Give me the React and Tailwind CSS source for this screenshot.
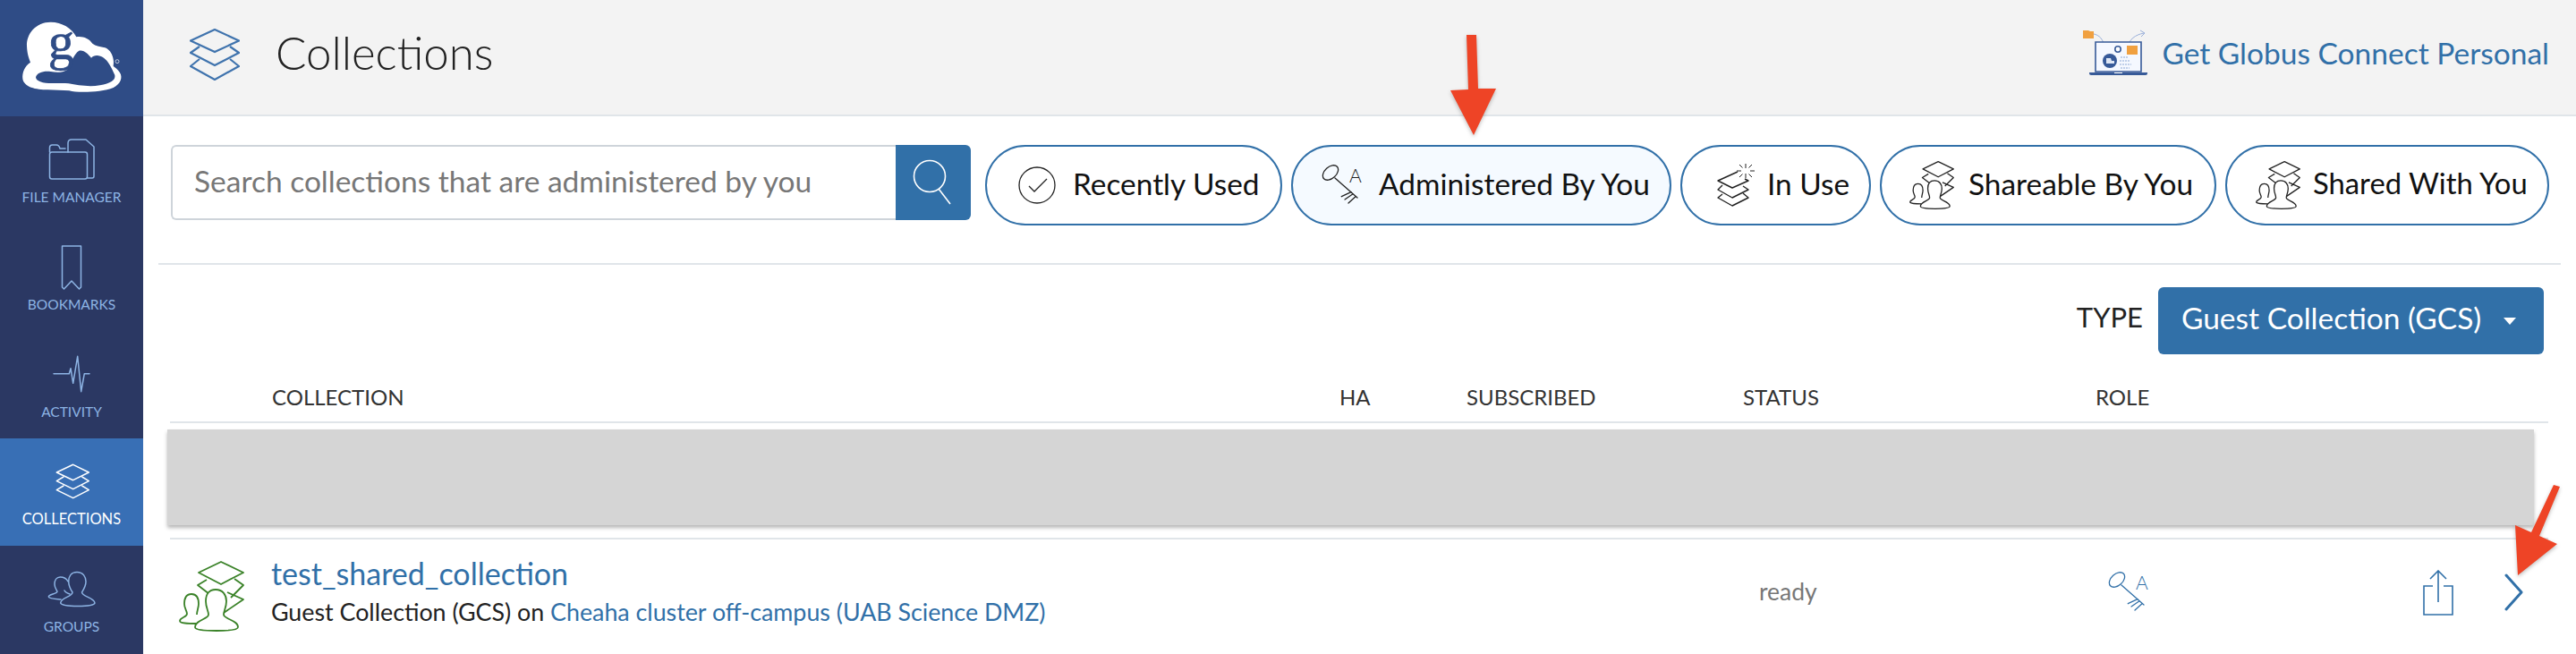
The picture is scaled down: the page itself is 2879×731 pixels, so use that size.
const NAV_STROKE = "#8db4e4";

function NavSvg({ children, active }) {
  return (
    <svg width="60" height="56" viewBox="0 0 60 56" fill="none" stroke={active ? "#ffffff" : NAV_STROKE} strokeWidth="1.5" strokeLinejoin="round" strokeLinecap="round">
      {children}
    </svg>
  );
}

function NavItem({ label, active, children }) {
  return (
    <div className={`flex h-[120px] shrink-0 flex-col items-center pt-5 ${active ? "bg-[#386fb5] text-white" : "text-[#8db4e4]"}`}>
      {children}
      <div className={`mt-[3px] leading-[22px] whitespace-nowrap ${active ? "text-[16.5px]" : "text-[15.5px]"}`}>{label}</div>
    </div>
  );
}

function KeyIcon({ color }) {
  return (
    <div className="relative h-[46px] w-[50px] shrink-0" style={{ color }}>
      <svg width="50" height="46" viewBox="0 0 50 46" fill="none" stroke="currentColor" strokeWidth="1.3" strokeLinecap="round">
        <ellipse cx="10" cy="9" rx="10" ry="6.5" transform="rotate(-42 10 9)" />
        <path d="M15 15 L40 37" />
        <path d="M22.3 35.7 L33 30.7 M26 39 L34.7 33 M30 43 L38 35.7" />
      </svg>
      <span className="absolute left-[31px] top-0 text-[21px] leading-[24px] font-light">A</span>
    </div>
  );
}

function SharedIcon({ width, height, color, stroke }) {
  return (
    <svg width={width} height={height} viewBox="0 0 73 79" fill="none" stroke={color} strokeWidth={stroke} strokeLinejoin="round" className="shrink-0">
      <path d="M47 1 L72 13 L47 26 L22 13 Z" fill="#fff" />
      <path d="M31 21 L21 27 L34 37" />
      <path d="M62 20 L72 27 L58 41" />
      <path d="M54 35 L72 43 L50 58" />
      <path d="M14 37 C8 37 6 42 6 48 C6 53 9 56 9 59 C9 63 1 63 1 67 C1 70 10 70 20 70 M14 37 C20 37 22 42 22 48 C22 52 20 56 20 60" />
      <path d="M41 32 C33 32 30 38 30 45 C30 52 33 56 33 60 C33 65 18 66 18 74 C18 77 30 78 42 78 C54 78 66 77 66 74 C66 66 50 65 50 60 C50 56 53 52 53 45 C53 38 49 32 41 32 Z" fill="#fff" />
    </svg>
  );
}

function Pill({ width, active, icon, label, textLeft, pad, size }) {
  return (
    <div className={`flex h-[90px] shrink-0 items-center rounded-[45px] border-2 border-[#3170a8] ${active ? "bg-[#f5faff]" : "bg-white"} ${width}`}>
      <div className={`flex h-[60px] shrink-0 items-center ${pad}`} style={{ width: textLeft }}>{icon}</div>
      <span className={`-mt-1 leading-[40px] font-normal whitespace-nowrap text-[#111] ${size || "text-[33.4px]"}`}>{label}</span>
    </div>
  );
}

function Logo() {
  return (
    <svg width="160" height="130" viewBox="-60 -54 480 390" className="block">
      <path fill="#fff" d="M110 20 C60 20 28 60 30 100 C31 125 36 140 42 155 C22 168 14 190 16 210 C20 238 60 247 100 247 C125 247 150 250 172 250 C200 258 280 256 320 240 C345 228 352 205 342 190 C335 178 326 172 320 168 C326 140 310 108 288 105 C272 102 262 100 250 92 C238 74 215 66 196 70 C180 40 148 20 110 20 Z" />
      <path fill="#2f4c86" d="M60 205 C64 190 85 183 110 186 C130 190 150 190 165 180 C178 160 188 125 205 116 C222 112 236 128 246 140 C254 130 272 128 288 140 C302 150 312 168 325 198 C328 215 310 226 275 232 C240 238 200 232 170 226 C140 222 100 230 75 220 C66 216 60 212 60 205 Z" />
      <text x="101" y="145" fontFamily="'Liberation Serif', serif" fontWeight="400" fontSize="175" stroke="#2f4c86" strokeWidth="2" fill="#2f4c86">g</text>
      <circle cx="333" cy="152" r="6" fill="none" stroke="#fff" strokeWidth="2" />
    </svg>
  );
}

function ConnectIcon() {
  return (
    <svg width="72" height="54" viewBox="0 0 72 54" fill="none" className="shrink-0">
      <path d="M0 2 H6 L8 3 H12 V11 H0 Z" fill="#f0a040" />
      <path d="M12 6 C18 7 23 12 24 21 M21 17 L24 22 L27 18" stroke="#8ea7d6" strokeWidth="0.9" />
      <path d="M50 20 C52 12 58 7 68 5 M64 2 L69 5 L65 9" stroke="#8ea7d6" strokeWidth="0.9" />
      <path d="M14 15 H65 V48 H14 Z" fill="#f5f8ff" stroke="#375a98" strokeWidth="1.6" />
      <path d="M7 49 H72 V50 Q72 52 70 52 H9 Q7 52 7 50 Z" fill="#375a98" />
      <rect x="35" y="49" width="9" height="1" fill="#fff" />
      <circle cx="30" cy="36" r="8" fill="#375a98" />
      <circle cx="39" cy="23" r="3.2" fill="#fff" stroke="#375a98" strokeWidth="1.6" />
      <path d="M26 39 V33 H31 L32 36 H35 V39 Z" fill="#dfe7f5" />
      <rect x="49" y="19" width="12" height="10" fill="#f0a040" />
      <path d="M42 32 H50 M41 36 H53 M41 40 H54 M42 44 H52" stroke="#8ea7d6" strokeWidth="1.1" strokeDasharray="2 1" />
    </svg>
  );
}

function RedArrow({ points }) {
  return (
    <svg className="absolute left-0 top-0" width="2879" height="731" viewBox="0 0 2879 731" fill="#ee4426" style={{ pointerEvents: "none", filter: "drop-shadow(0 2px 2px rgba(0,0,0,.25))" }}>
      <polygon points={points} />
    </svg>
  );
}

export default function App() {
  return (
    <div className="relative flex h-[731px] w-full overflow-hidden bg-white font-['Lato','Liberation_Sans',sans-serif] font-light text-[#111]">
      <aside className="flex w-[160px] shrink-0 flex-col bg-[#2b3863] font-normal">
        <div className="h-[130px] shrink-0 bg-[#2f4c86]"><Logo /></div>
        <NavItem label="FILE MANAGER">
          <NavSvg>
            <path d="M26 20 V10 Q26 6 30 6 H46 L55 14 V47 Q55 49 53 49 H48" />
            <path d="M5.5 20 V15 Q5.5 12 8.5 12 H13 Q16 12 17 16 H23" />
            <rect x="5.5" y="20" width="42" height="30" rx="2.5" />
          </NavSvg>
        </NavItem>
        <NavItem label="BOOKMARKS">
          <NavSvg><path d="M19.5 5 H40.5 V51 L38.5 53 L30 44 L21.5 53 L19.5 51 Z" /></NavSvg>
        </NavItem>
        <NavItem label="ACTIVITY">
          <NavSvg><path d="M10 27.7 H27.3 L29 21.7 L31.7 38.3 L36.7 8.3 L40.7 47.7 L44.3 27.7 H50" /></NavSvg>
        </NavItem>
        <NavItem label="COLLECTIONS" active>
          <NavSvg active>
            <path d="M31.7 9.3 L49.3 18 L31.7 26.7 L13.3 18 Z" />
            <path d="M21 23 L13.3 27.7 L31.7 36.7 L49.3 27.7 L41.7 23" />
            <path d="M21 33 L13.3 37.7 L31.7 46.7 L49.3 37.7 L41.7 33" />
          </NavSvg>
        </NavItem>
        <NavItem label="GROUPS">
          <NavSvg>
            <path d="M26 20 C24 16 21 15 17.3 15 C13 15 11 19 11 23 C11 27 13 29 14 31 C14 34 4.3 34 4.3 37 C4.3 39 12 39.5 18 40" />
            <path d="M22 30 C23 32 25 33 28 34" />
            <path d="M36 9.5 C29 9.5 26.7 15 26.7 20 C26.7 25 29 29 31 32 C31 37 18 38 17.7 44 C19 47 30 47.5 37 47.5 C45 47.5 55 47 56 44 C55 38 42 37 41.5 32 C44 28 46 25 46 20 C46 15 43 9.5 36 9.5 Z" />
          </NavSvg>
        </NavItem>
      </aside>

      <main className="flex min-w-0 flex-1 flex-col">
        <header className="flex h-[130px] shrink-0 items-center border-b-2 border-[#e0e5e9] bg-[#f3f3f3] pr-[30px] pl-[52px]">
          <svg width="56" height="58" viewBox="0 0 56 58" fill="none" stroke="#3f73ad" strokeWidth="2.2" className="-mt-[6px] shrink-0">
            <path d="M28 1 L55 13.5 L28 26 L1 13.5 Z" />
            <path d="M11 20 L1 27 L28 41 L55 27 L45 20" />
            <path d="M11 34 L1 42 L28 57 L55 42 L45 34" />
          </svg>
          <h1 className="ml-[40px] -mt-[10px] text-[51px] leading-[60px] font-light text-[#222]">Collections</h1>
          <div className="ml-auto -mt-[10px] flex items-center gap-[16px]">
            <ConnectIcon />
            <span className="text-[33.5px] leading-[40px] font-normal text-[#3170a8]">Get Globus Connect Personal</span>
          </div>
        </header>

        <div className="flex shrink-0 items-start pt-[32px] pl-[31px] pr-[30px]">
          <div className="flex h-[84px] w-[894px] shrink-0 rounded-[6px]">
            <div className="flex flex-1 items-center rounded-l-[6px] border-2 border-r-0 border-[#ced4da] pl-[24px] text-[33.5px] font-normal whitespace-nowrap text-[#777]">
              <span className="-mt-1">Search collections that are administered by you</span>
            </div>
            <div className="flex w-[84px] shrink-0 items-center justify-center rounded-r-[6px] bg-[#3170a8]">
              <svg width="50" height="56" viewBox="0 0 50 56" fill="none" stroke="#fff" strokeWidth="1.6">
                <circle cx="21" cy="21" r="17.5" />
                <path d="M31 35 L44 52" />
              </svg>
            </div>
          </div>
          <div className="ml-[16px] flex gap-[10px]">
            <Pill width="w-[332px]" pad="pl-[35px]" textLeft="96px" label="Recently Used" icon={
              <svg width="42" height="42" viewBox="0 0 42 42" fill="none" stroke="#222" strokeWidth="1.3" className="shrink-0">
                <circle cx="21" cy="21" r="20" />
                <path d="M12 22 L18 28 L32 14" />
              </svg>
            } />
            <Pill width="w-[425px]" active pad="pl-[32px]" textLeft="96px" label="Administered By You" icon={<KeyIcon color="#222" />} />
            <Pill width="w-[213px]" pad="pl-[37px]" textLeft="95px" label="In Use" icon={
              <svg width="46" height="48" viewBox="0 0 46 48" fill="none" stroke="#222" strokeWidth="1.4" strokeLinejoin="round" className="shrink-0">
                <path d="M25 9 L3 19 L19 27 L37 19 L33 17" />
                <path d="M8 24 L3 29 L19 38 L37 29 L31 25" />
                <path d="M8 34 L3 38 L19 47 L37 38 L31 33" />
                <path d="M34 5 V0 M34 11 V16 M29 8 H24 M39 8 H44 M30.5 4.5 L27 1 M37.5 11.5 L41 15 M37.5 4.5 L41 1 M30.5 11.5 L27 15" strokeWidth="1" />
              </svg>
            } />
            <Pill width="w-[376px]" pad="pl-[29px]" textLeft="97px" label="Shareable By You" icon={<SharedIcon width={54} height={54} color="#222" stroke={1.9} />} />
            <Pill width="w-[362px]" pad="pl-[30px]" textLeft="96px" label="Shared With You" size="text-[32.8px]" icon={<SharedIcon width={54} height={54} color="#222" stroke={1.9} />} />
          </div>
        </div>

        <div className="mt-[42px] ml-[17px] mr-[17px] h-[2px] shrink-0 bg-[#e0e5e9]" />

        <div className="mt-[25px] flex h-[75px] shrink-0 items-center justify-end pr-[36px]">
          <span className="mr-[17px] -mt-[8px] text-[31px] font-normal text-[#222]">TYPE</span>
          <div className="flex h-[75px] w-[431px] items-center rounded-[6px] bg-[#3170a8] pl-[26px] text-white">
            <span className="-mt-[6px] text-[33.5px] font-normal whitespace-nowrap">Guest Collection (GCS)</span>
            <span className="ml-[25px] mt-[1px] h-0 w-0 border-x-[7px] border-t-[8px] border-x-transparent border-t-white" />
          </div>
        </div>

        <div className="ml-[30px] mr-[31px] grid h-[77px] shrink-0 grid-cols-[1193px_142px_309px_394px_1fr] border-b-2 border-[#e0e5e9] pt-[30px] pl-[114px] text-[24px] leading-[36px] font-normal text-[#333]">
          <span>COLLECTION</span>
          <span>HA</span>
          <span>SUBSCRIBED</span>
          <span>STATUS</span>
          <span>ROLE</span>
        </div>

        <div className="mt-[7px] ml-[27px] h-[107px] w-[2645px] shrink-0 bg-[#d5d5d5] shadow-[0_3px_4px_rgba(0,0,0,0.28)]" />

        <div className="mt-[14px] ml-[30px] mr-[31px] h-[2px] shrink-0 bg-[#e0e5e9]" />

        <div className="ml-[30px] flex h-[127px] shrink-0 items-start pt-[24px] pl-[10px]">
          <SharedIcon width={73} height={79} color="#3a8228" stroke={1.8} />
          <div className="ml-[30px] w-[1663px] shrink-0">
            <div className="-mt-[6px] text-[34px] leading-[40px] font-normal text-[#3170a8]">test_shared_collection</div>
            <div className="mt-[5px] text-[26.8px] leading-[36px] font-normal text-[#222]">
              Guest Collection (GCS) on <span className="text-[#3170a8]">Cheaha cluster off-campus (UAB Science DMZ)</span>
            </div>
          </div>
          <div className="mt-[16px] w-[390px] shrink-0 text-[26.5px] leading-[36px] font-normal text-[#777]">ready</div>
          <div className="mt-[12px] w-[352px] shrink-0">
            <KeyIcon color="#3170a8" />
          </div>
          <svg width="34" height="52" viewBox="0 0 34 52" fill="none" stroke="#3170a8" strokeWidth="1.6" className="mt-[10px] shrink-0">
            <path d="M11 18 H1 V50 H33 V18 H23" />
            <path d="M17 36 V1 M8 10 L17 1 L26 10" />
          </svg>
          <svg width="22" height="42" viewBox="0 0 22 42" fill="none" stroke="#3170a8" strokeWidth="3" strokeLinecap="round" strokeLinejoin="round" className="mt-[14px] ml-[57px] shrink-0">
            <path d="M2 2 L19 21 L2 40" />
          </svg>
        </div>
      </main>

      <RedArrow points="1639,39 1650,39 1652,99 1672,99 1647,151 1621,101 1641,100" />
      <RedArrow points="2854,542 2861,544 2838,599 2858,608 2814,643 2811,587 2829,595" />
    </div>
  );
}
